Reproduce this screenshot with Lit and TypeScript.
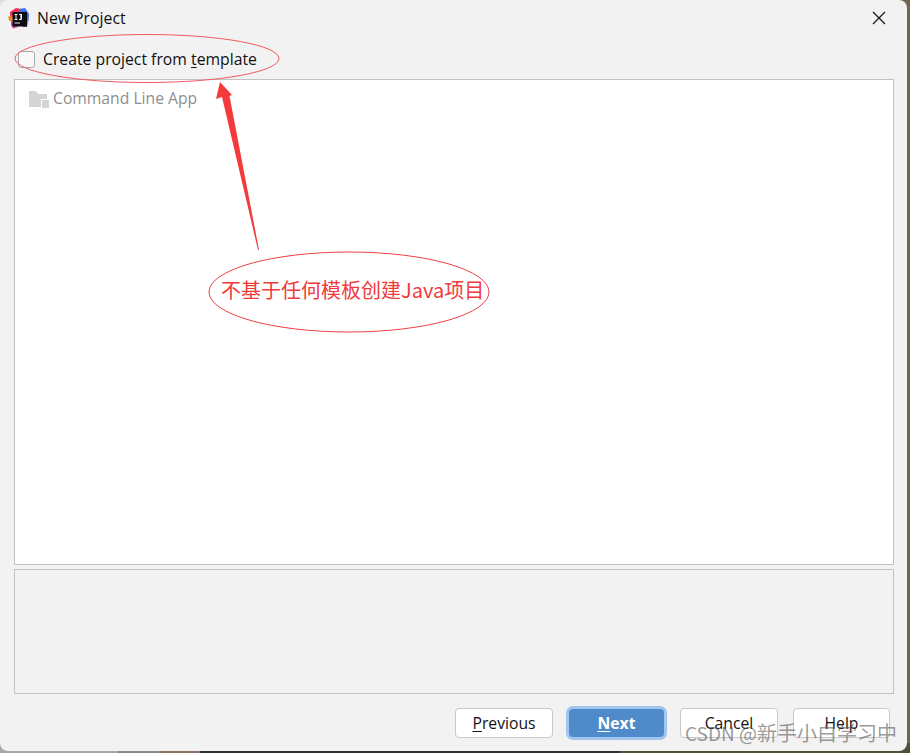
import { LitElement, html, css, svg } from "lit";
import { customElement } from "lit/decorators.js";

@customElement("app-root")
export class AppRoot extends LitElement {
  static styles = css`
    :host {
      display: block;
      position: relative;
      width: 910px;
      height: 753px;
      overflow: hidden;
      background: linear-gradient(90deg, #dcdcdc 0 50%, #6f6650 50%);
      font-family: "Open Sans", "Noto Sans", "Noto Sans CJK SC", sans-serif;
      color: #111;
    }
    .backdrop-bottom {
      position: absolute;
      left: 0;
      right: 0;
      bottom: 0;
      height: 10px;
      background: linear-gradient(90deg, #a8a8a8 0 118px, #8f8a80 118px 160px, #8e6f68 160px 200px, #2e2f3a 200px 620px, #4a5238 620px);
    }
    .dialog {
      position: relative;
      box-sizing: border-box;
      width: 907px;
      height: 751px;
      background: #f2f2f2;
      border-radius: 8px;
      padding: 0 13px 0 14px;
      display: flex;
      flex-direction: column;
    }
    .title {
      height: 36px;
      display: flex;
      align-items: center;
      gap: 7px;
      margin-left: -6px;
      font-size: 15.8px;
      flex: none;
    }
    .close {
      margin-left: auto;
      margin-right: 8px;
      display: block;
    }
    .check-row {
      height: 43px;
      flex: none;
      display: flex;
      align-items: center;
      gap: 8px;
      padding: 3px 0 0 4px;
      box-sizing: border-box;
      font-size: 15.75px;
    }
    .box {
      width: 15px;
      height: 15px;
      background: #f8f8f8;
      border: 1px solid #a8a8a8;
      border-radius: 3px;
    }
    u { text-underline-offset: 2px; }
    .list {
      flex: none;
      box-sizing: border-box;
      height: 486px;
      background: #fff;
      border: 1px solid #c2c2c2;
      padding: 7px 14px;
    }
    .item {
      display: flex;
      align-items: center;
      gap: 4px;
      color: #8f8f8f;
      font-size: 15.7px;
      line-height: 22px;
    }
    .item span { padding-bottom: 2px; }
    .desc {
      flex: none;
      box-sizing: border-box;
      height: 125px;
      margin-top: 4px;
      border: 1px solid #c2c2c2;
    }
    .buttons {
      flex: 1;
      display: flex;
      justify-content: flex-end;
      align-items: flex-start;
      gap: 15px;
      padding: 14px 4px 0 0;
    }
    .btn {
      box-sizing: border-box;
      width: 98px;
      height: 30px;
      border: 1px solid #c8c8c8;
      border-radius: 4px;
      background: #fff;
      font-size: 15.7px;
      display: flex;
      align-items: center;
      justify-content: center;
    }
    .btn.next {
      width: 95px;
      height: 28px;
      margin: 1px;
      background: #4f8bcb;
      border: none;
      color: #fff;
      font-weight: 700;
      box-shadow: 0 0 0 3px #a0c6f0;
    }
    .btn.help { width: 97px; }
    .overlay {
      position: absolute;
      inset: 0;
      pointer-events: none;
    }
    .note {
      position: absolute;
      left: 221px;
      top: 276px;
      font-size: 20px;
      line-height: 27px;
      white-space: nowrap;
      color: #f13a3a;
      font-family: "Noto Sans CJK SC", sans-serif;
    }
    .mark {
      position: absolute;
      left: 685px;
      top: 720px;
      font-size: 20px;
      line-height: 26px;
      white-space: nowrap;
      color: rgba(90, 90, 90, 0.62);
      font-family: "Noto Sans CJK SC", sans-serif;
    }
    .mark .latin { font-size: 19px; }
  `;

  private logo() {
    return html`<svg width="22" height="22" viewBox="0 0 22 22">
      <path d="M2 5 L8 1 L13 2 L10 12 L2 10 Z" fill="#f0305f" />
      <path d="M0 10 L4 8 L5 15 L1.5 14 Z" fill="#f7832a" />
      <path d="M11 2 L17 1 L21 7 L20.5 15 L14 12 Z" fill="#3f6fe8" />
      <path d="M3 14 L10 20 L5 21.5 L3 18 Z" fill="#d83aa0" />
      <path d="M14 17 L20 15 L19 20 L15 20 Z" fill="#7a4fd8" />
      <rect x="4.5" y="5" width="14.5" height="14.5" fill="#0c0c10" />
      <path d="M6.5 7h3v1h-1v4h1v1h-3v-1h1v-4h-1zM11 7h3v5q0 1 -1.2 1h-1.8v-1h1.4v-4H11z" fill="#f4f4f4" />
      <rect x="6.5" y="15.5" width="5.5" height="1" fill="#e8e8e8" />
    </svg>`;
  }

  private folder() {
    return html`<svg width="20" height="17" viewBox="0 0 20 17">
      <path d="M0 0h7l2 3h9v5h-6v8H0z" fill="#d4d4d4" />
      <rect x="13" y="9" width="7" height="8" fill="#d4d4d4" />
    </svg>`;
  }

  private annotations() {
    return svg`<svg class="overlay" width="910" height="753" viewBox="0 0 910 753">
      <ellipse cx="147" cy="58.5" rx="132" ry="24" fill="none" stroke="#ee5a60" stroke-width="1" />
      <ellipse cx="349" cy="292" rx="140" ry="40" fill="none" stroke="#ee4048" stroke-width="1" />
      <path d="M258 250 L259 250 L229.5 96 L232 95 L220 82 L216 99 L222 97 Z" fill="#f43a3a" />
    </svg>`;
  }

  render() {
    return html`
      <div class="backdrop-bottom"></div>
      <div class="dialog">
        <div class="title">
          ${this.logo()}
          <span>New Project</span>
          <svg class="close" width="14" height="14" viewBox="0 0 14 14">
            <path d="M1 1 L13 13 M13 1 L1 13" stroke="#1a1a1a" stroke-width="1.3" fill="none" />
          </svg>
        </div>
        <div class="check-row">
          <span class="box"></span>
          <span>Create project from <u>t</u>emplate</span>
        </div>
        <div class="list">
          <div class="item">${this.folder()}<span>Command Line App</span></div>
        </div>
        <div class="desc"></div>
        <div class="buttons">
          <div class="btn"><span><u>P</u>revious</span></div>
          <div class="btn next"><span><u>N</u>ext</span></div>
          <div class="btn"><span>Cancel</span></div>
          <div class="btn help"><span>Help</span></div>
        </div>
      </div>
      ${this.annotations()}
      <div class="note">不基于任何模板创建Java项目</div>
      <div class="mark"><span class="latin">CSDN @</span>新手小白学习中</div>
    `;
  }
}
